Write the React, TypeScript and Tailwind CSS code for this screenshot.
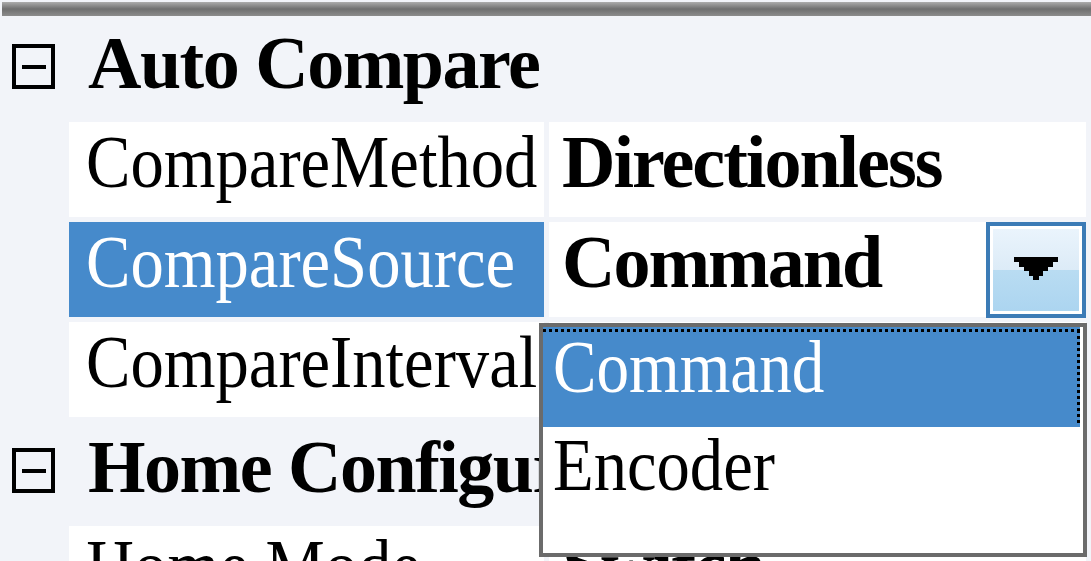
import React from 'react'

interface RowProps {
  label: string
  value: string
  selected?: boolean
  dropdown?: boolean
}

function Category({ title }: { title: string }) {
  return (
    <div className="flex items-start h-[99px] whitespace-nowrap">
      {/* collapse box */}
      <div className="ml-[12px] mt-[26px] w-[43px] h-[45px] shrink-0 border-[4px] border-black flex items-center justify-center">
        <div className="w-[24px] h-[4px] bg-black" />
      </div>
      <div className="ml-[33px] pt-[8px] text-[74px] leading-none font-bold tracking-[-1.5px]">{title}</div>
    </div>
  )
}

function DropButton() {
  return (
    <div className="w-[100px] h-[96px] shrink-0 border-[4px] border-[#3b7bb6] bg-white p-[3px]">
      <div className="w-full h-full flex items-center justify-center bg-[linear-gradient(to_bottom,#eaf4fc_0%,#dcebf7_50%,#b9dcf2_50%,#acd5f0_100%)]">
        <svg width="44" height="23" viewBox="0 0 44 23" className="mb-[4px]">
          <polygon
            fill="#000"
            points="0,0 44,0 44,5 39,5 39,10 34,10 34,14 29,14 29,19 25,19 25,23 19,23 19,19 15,19 15,14 10,14 10,10 5,10 5,5 0,5"
          />
        </svg>
      </div>
    </div>
  )
}

function Row({ label, value, selected, dropdown }: RowProps) {
  return (
    <div className="flex h-[95px] gap-[5px] pl-[69px] text-[74px] leading-none whitespace-nowrap">
      <div
        className={
          selected
            ? 'w-[475px] shrink-0 overflow-hidden bg-[#468acb] text-white pl-[17px] pt-[3px]'
            : 'w-[475px] shrink-0 overflow-hidden bg-white text-black pl-[17px] pt-[3px]'
        }
      >
        <span className="inline-block origin-left scale-x-[0.9]">{label}</span>
      </div>
      <div className="w-[537px] shrink-0 flex justify-between bg-white">
        <div className="pl-[13px] pt-[3px] font-bold tracking-[-2px]">{value}</div>
        {dropdown && <DropButton />}
      </div>
    </div>
  )
}

function Popup() {
  return (
    <div className="absolute left-[539px] top-[323px] w-[548px] h-[234px] border-[4px] border-[#6b6b6b] bg-white text-[74px] leading-none whitespace-nowrap">
      <div className="relative h-[100px] mr-[3px] bg-[#468acb] text-white pl-[10px] pt-[3px]">
        <span className="inline-block origin-left scale-x-[0.88]">Command</span>
        <svg className="absolute inset-0 w-full h-full" viewBox="0 0 537 100" preserveAspectRatio="none">
          <line x1="0" y1="3.5" x2="537" y2="3.5" stroke="#000" strokeWidth="3" strokeDasharray="3 3" />
          <line x1="535.5" y1="3" x2="535.5" y2="96" stroke="#000" strokeWidth="3" strokeDasharray="3 3" />
        </svg>
      </div>
      <div className="h-[100px] text-black pl-[10px] pt-[1px]">
        <span className="inline-block origin-left scale-x-[0.9]">Encoder</span>
      </div>
    </div>
  )
}

export default function App() {
  return (
    <div className="relative w-[1091px] h-[561px] overflow-hidden bg-[#f2f4f9] text-black font-['Liberation_Serif','Times_New_Roman',serif]">
      <div className="pt-[2px] pl-[2px]">
        <div className="h-[14px] bg-gradient-to-b from-[#acacac] via-[#6f6f6f] to-[#8c8c8c]" />
      </div>
      <div className="flex flex-col gap-[5px] pt-[2px]">
        <Category title="Auto Compare" />
        <Row label="CompareMethod" value="Directionless" />
        <Row label="CompareSource" value="Command" selected dropdown />
        <Row label="CompareInterval" value="" />
        <Category title="Home Configuration" />
        <Row label="Home Mode" value="Switch" />
      </div>
      <Popup />
    </div>
  )
}
